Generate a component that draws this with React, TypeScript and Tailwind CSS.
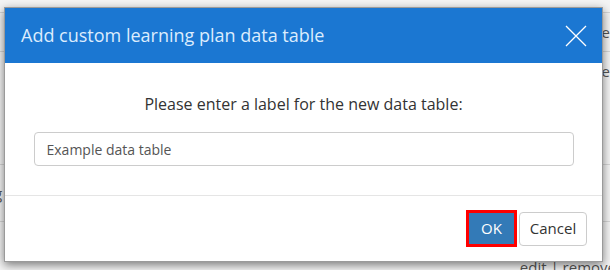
export default function App() {
  return (
    <div className="relative w-[610px] h-[270px] overflow-hidden bg-[#f4f4f4] font-['Open_Sans',sans-serif] text-[#333]">
      {/* page behind the dialog */}
      <div className="flex flex-col">
        <div className="h-[13px] border-b border-[#d6d6d6]" />
        <div className="h-[39px] border-b border-[#d6d6d6] flex items-center justify-end text-[15px] text-[#555]">
          <span className="mr-[-6px]">er</span>
        </div>
        <div className="h-[113px] border-b border-[#d6d6d6] flex items-start justify-end pt-[8px] text-[15px] text-[#555]">
          <span className="mr-[-6px]">er</span>
        </div>
        <div className="h-[57px] border-b border-[#d6d6d6] flex items-center text-[15px] text-[#555]">
          <span className="ml-[-6px]">g</span>
        </div>
        <div className="h-[48px] flex items-end justify-end text-[15px] text-[#555]">
          <span className="mr-[-6px] mb-[-8px]">edit | remove</span>
        </div>
      </div>

      {/* dialog */}
      <div className="absolute left-[4px] top-[7px] w-[599px] h-[255px] bg-white border border-[#9a9a9a] shadow-[0_3px_9px_rgba(0,0,0,0.5)] flex flex-col">
        <div className="h-[55px] bg-[#1b77d2] flex items-center justify-between pl-[16px] pr-[14px]">
          <h2 className="text-[18px] text-[#dcecfd] font-normal">Add custom learning plan data table</h2>
          <svg width="24" height="24" viewBox="0 0 24 24" className="text-white">
            <path d="M2 2 L22 22 M22 2 L2 22" stroke="currentColor" strokeWidth="1.3" fill="none" />
          </svg>
        </div>
        <div className="flex flex-col items-center pt-[30px] pb-[29px] border-b border-[#e5e5e5]">
          <p className="text-[16px] leading-[22px] text-[#333]">Please enter a label for the new data table:</p>
          <div className="mt-[17px] w-[540px] h-[34px] border border-[#cccccc] rounded-[4px] flex items-center px-[12px] text-[14px] text-[#555]">
            Example data table
          </div>
        </div>
        <div className="flex-1 flex items-center justify-end gap-[2px] pr-[15px]">
          <button className="w-[51px] h-[37px] border-[3px] border-[#ff0000] bg-[#337ab7] text-white text-[15px] flex items-center justify-center">
            OK
          </button>
          <button className="w-[68px] h-[34px] border border-[#cccccc] rounded-[4px] bg-white text-[#333] text-[15px] flex items-center justify-center">
            Cancel
          </button>
        </div>
      </div>
    </div>
  );
}
